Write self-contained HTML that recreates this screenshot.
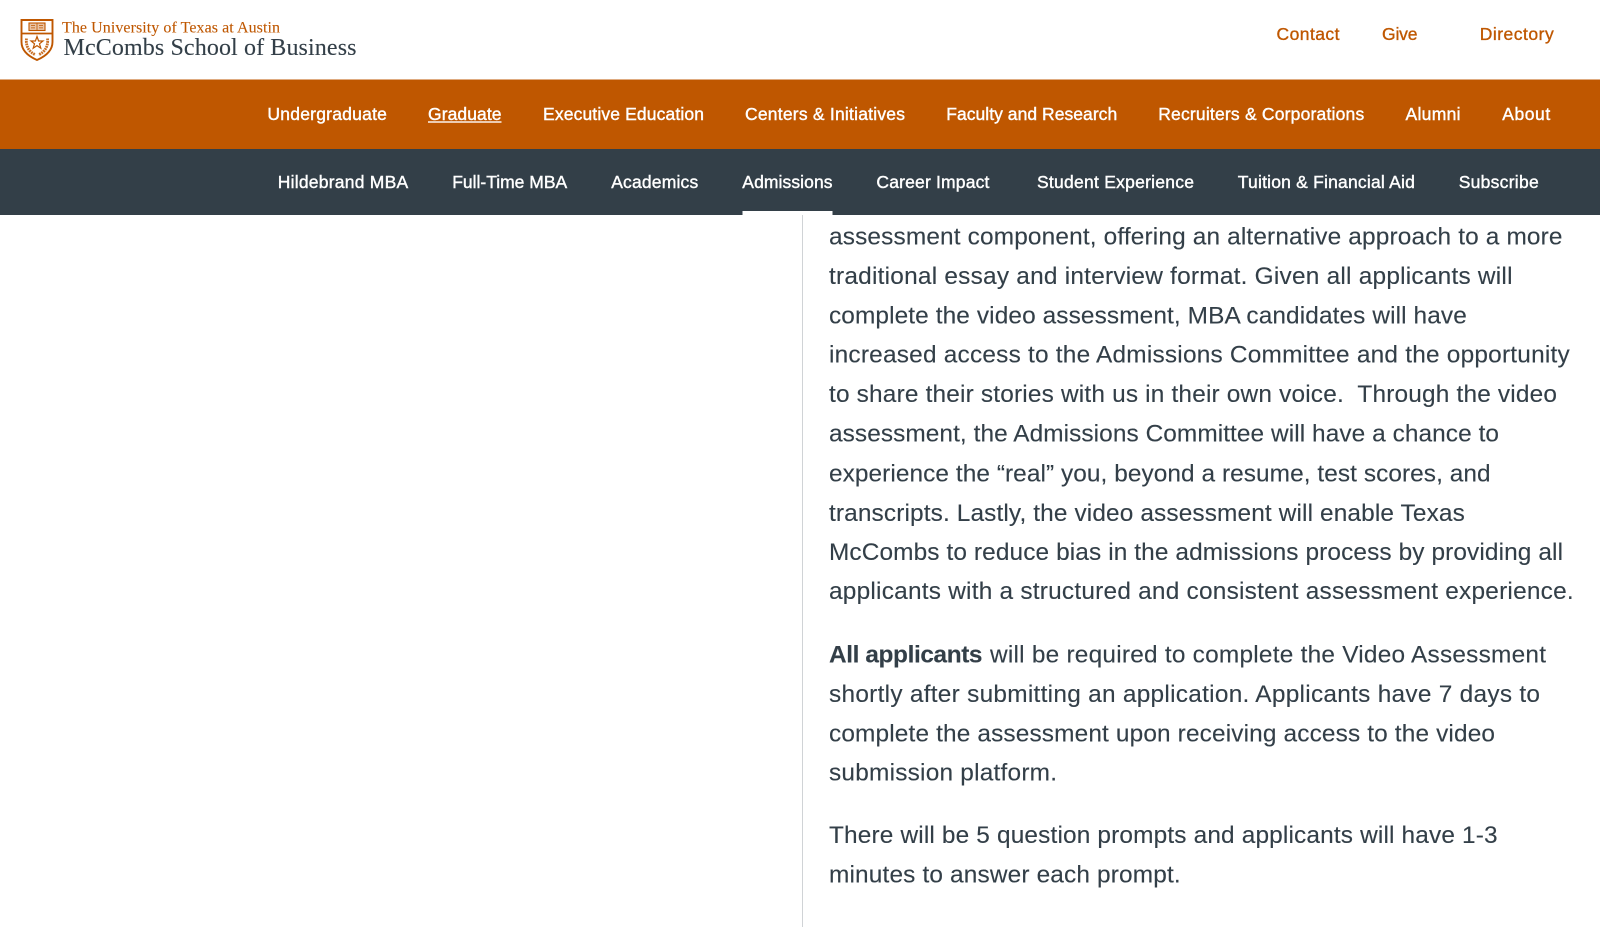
<!DOCTYPE html>
<html lang="en"><head><meta charset="utf-8"><title>McCombs School of Business</title>
<style>
html,body{margin:0;padding:0;background:#fff;width:1600px;height:927px;overflow:hidden}
svg{display:block}
text{font-family:"Liberation Sans",sans-serif;white-space:pre}
.n{font-size:17.5px;fill:#fff;stroke:#fff;stroke-width:.4}
.t{font-size:17.5px;fill:#bf5700;stroke:#bf5700;stroke-width:.35}
.b{font-size:24.4px;fill:#333f48;stroke:#333f48;stroke-width:.12}
.s{font-family:"Liberation Serif",serif}
</style></head><body>
<svg width="1600" height="927" viewBox="0 0 1600 927" xmlns="http://www.w3.org/2000/svg">
<rect x="0" y="79.5" width="1600" height="69.5" fill="#bf5700"/>
<rect x="0" y="149" width="1600" height="66" fill="#333f48"/>
<rect x="742.5" y="211" width="90" height="4" fill="#fff"/>
<rect x="802" y="215" width="1" height="712" fill="#d0d3d6"/>

<!-- shield -->
<g fill="none" stroke="#bf5700">
<path d="M21.5 20H52.5V42C52.5 51 45 56.5 37 60C29 56.5 21.5 51 21.5 42Z" stroke-width="1.9"/>
<path d="M21.5 33.5H52.5" stroke-width="1.7"/>
<rect x="29" y="23" width="16" height="7.5" fill="#e9c4a5" stroke-width="1.1"/>
<path d="M37 23V30.5M31 25.5H35M39 25.5H43M31 27.9H35M39 27.9H43" stroke-width=".8"/>
<path d="M37 36.5L38.6 41H43L39.5 43.8L40.8 48.2L37 45.6L33.2 48.2L34.5 43.8L31 41H35.4Z" stroke-width="1.2"/>
<path d="M26.5 38.5C25.5 46 29 52 35.5 54.8M47.5 38.5C48.5 46 45 52 38.5 54.8" stroke-width="2.8" stroke-dasharray="1.8 .7" stroke-opacity=".85"/>
</g>

<!-- logo text -->
<text class="s" x="62" y="32.5" font-size="16" fill="#bf5700" stroke="#bf5700" stroke-width=".1" textLength="218">The University of Texas at Austin</text>
<text class="s" x="63.5" y="55" font-size="24" fill="#333f48" stroke="#333f48" stroke-width=".1" textLength="293">McCombs School of Business</text>

<!-- top links -->
<text class="t" x="1276.5" y="40" textLength="63">Contact</text>
<text class="t" x="1382" y="40" textLength="35.5">Give</text>
<text class="t" x="1479.7" y="40" textLength="74">Directory</text>

<!-- main nav -->
<text class="n" x="267.4" y="120" textLength="119.5">Undergraduate</text>
<text class="n" x="428" y="120" textLength="73.5">Graduate</text>
<rect x="428" y="121.3" width="73.5" height="1.4" fill="#fff"/>
<text class="n" x="543" y="120" textLength="161">Executive Education</text>
<text class="n" x="745" y="120" textLength="160">Centers &amp; Initiatives</text>
<text class="n" x="946.2" y="120" textLength="171">Faculty and Research</text>
<text class="n" x="1158.2" y="120" textLength="206">Recruiters &amp; Corporations</text>
<text class="n" x="1405.5" y="120" textLength="55">Alumni</text>
<text class="n" x="1502.2" y="120" textLength="48">About</text>

<!-- sub nav -->
<text class="n" x="277.7" y="188" textLength="130.5">Hildebrand MBA</text>
<text class="n" x="452.2" y="188" textLength="115">Full-Time MBA</text>
<text class="n" x="611.2" y="188" textLength="87">Academics</text>
<text class="n" x="742.3" y="188" textLength="90.2">Admissions</text>
<text class="n" x="876.4" y="188" textLength="113">Career Impact</text>
<text class="n" x="1037" y="188" textLength="157">Student Experience</text>
<text class="n" x="1237.8" y="188" textLength="177">Tuition &amp; Financial Aid</text>
<text class="n" x="1458.7" y="188" textLength="80">Subscribe</text>

<!-- body -->
<text class="b" x="829" y="244.3" textLength="733.5">assessment component, offering an alternative approach to a more</text>
<text class="b" x="829" y="284.2" textLength="683.5">traditional essay and interview format. Given all applicants will</text>
<text class="b" x="829" y="323.6" textLength="637.8">complete the video assessment, MBA candidates will have</text>
<text class="b" x="829" y="362.5" textLength="740.7">increased access to the Admissions Committee and the opportunity</text>
<text class="b" x="829" y="401.9" textLength="728">to share their stories with us in their own voice.  Through the video</text>
<text class="b" x="829" y="441.3" textLength="670">assessment, the Admissions Committee will have a chance to</text>
<text class="b" x="829" y="481.5" textLength="661.6">experience the “real” you, beyond a resume, test scores, and</text>
<text class="b" x="829" y="520.8" textLength="635.8">transcripts. Lastly, the video assessment will enable Texas</text>
<text class="b" x="829" y="560.1" textLength="734">McCombs to reduce bias in the admissions process by providing all</text>
<text class="b" x="829" y="599.1" textLength="744.7">applicants with a structured and consistent assessment experience.</text>

<text class="b" x="829" y="662.7" font-weight="700" textLength="153.5">All applicants</text>
<text class="b" x="990" y="662.7" textLength="556">will be required to complete the Video Assessment</text>
<text class="b" x="829" y="702" textLength="711">shortly after submitting an application. Applicants have 7 days to</text>
<text class="b" x="829" y="741.4" textLength="666">complete the assessment upon receiving access to the video</text>
<text class="b" x="829" y="780.6" textLength="228">submission platform.</text>

<text class="b" x="829" y="842.9" textLength="668.6">There will be 5 question prompts and applicants will have 1-3</text>
<text class="b" x="829" y="882.7" textLength="351.7">minutes to answer each prompt.</text>
</svg>
</body></html>
